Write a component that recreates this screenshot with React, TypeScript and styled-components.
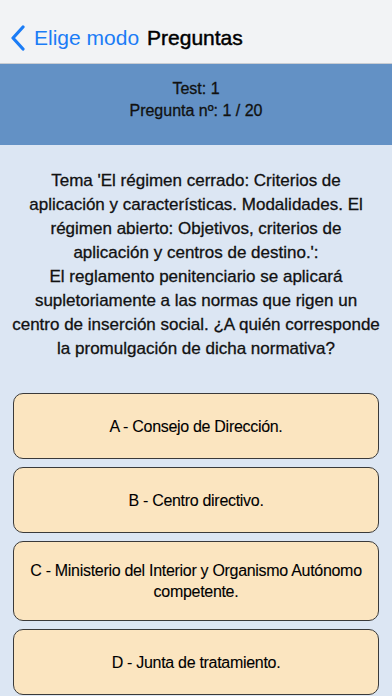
import styled, { createGlobalStyle } from 'styled-components';

const GlobalStyle = createGlobalStyle`
    html, body {
        margin: 0;
        padding: 0;
        background: #dce6f3;
    }
    body {
        font-family: 'Liberation Sans', Arial, sans-serif;
    }
`;

const Screen = styled.div`
    width: 392px;
    height: 696px;
    overflow: hidden;
    display: flex;
    flex-direction: column;
    background: #dce6f3;
    & > * {
        flex-shrink: 0;
    }
`;

const NavBar = styled.div`
    height: 64px;
    box-sizing: border-box;
    padding: 12px 0 0 10px;
    display: flex;
    align-items: center;
    background: #f2f3f5;
    border-bottom: 1px solid #c9ccd2;
`;

const BackLink = styled.span`
    display: flex;
    align-items: center;
    gap: 8px;
    color: #1b7cf6;
    font-size: 21px;
`;

const NavTitle = styled.span`
    margin-left: 8px;
    color: #000;
    font-size: 21px;
    -webkit-text-stroke: 0.45px #000;
`;

const Header = styled.div`
    height: 81px;
    box-sizing: border-box;
    padding-top: 14px;
    display: flex;
    flex-direction: column;
    align-items: center;
    background: #6391c5;
    color: #111;
    font-size: 16px;
    line-height: 22px;
    -webkit-text-stroke: 0.3px #111;
`;

const QuestionBlock = styled.div`
    margin: 24px 0 32px;
    text-align: center;
    color: #111;
    font-size: 17px;
    line-height: 24px;
    -webkit-text-stroke: 0.3px #111;
`;

const Line = styled.p<{ $inset: number }>`
    margin: 0 ${(props) => props.$inset}px;
`;

const Answers = styled.div`
    display: flex;
    flex-direction: column;
    gap: 8px;
    padding: 0 13px;
`;

const Answer = styled.div<{ $tall?: boolean }>`
    min-height: ${(props) => (props.$tall ? '80px' : '66px')};
    box-sizing: border-box;
    padding: 8px 8px;
    display: flex;
    align-items: center;
    justify-content: center;
    text-align: center;
    background: #fbe5c0;
    border: 1px solid #3a3a3a;
    border-radius: 10px;
    color: #000;
    font-size: 16px;
    letter-spacing: -0.3px;
    line-height: 21px;
    -webkit-text-stroke: 0.1px #000;
`;

function Chevron(): JSX.Element {
    return (
        <svg width="16" height="26" viewBox="0 0 16 26">
            <path d="M13 2 L3 13 L13 24" fill="none" stroke="#1b7cf6" strokeWidth="3.2" strokeLinecap="round" strokeLinejoin="round" />
        </svg>
    );
}

const answers = [
    { text: 'A - Consejo de Dirección.' },
    { text: 'B - Centro directivo.' },
    { text: 'C - Ministerio del Interior y Organismo Autónomo competente.', tall: true },
    { text: 'D - Junta de tratamiento.' },
];

export default function App(): JSX.Element {
    return (
        <Screen>
            <GlobalStyle />
            <NavBar>
                <BackLink>
                    <Chevron />
                    Elige modo
                </BackLink>
                <NavTitle>Preguntas</NavTitle>
            </NavBar>
            <Header>
                <span>Test: 1</span>
                <span>Pregunta nº: 1 / 20</span>
            </Header>
            <QuestionBlock>
                <Line $inset={14}>
                    Tema 'El régimen cerrado: Criterios de aplicación y características. Modalidades. El régimen abierto: Objetivos, criterios de aplicación y centros de destino.':
                </Line>
                <Line $inset={11}>
                    El reglamento penitenciario se aplicará supletoriamente a las normas que rigen un centro de inserción social. ¿A quién corresponde la promulgación de dicha normativa?
                </Line>
            </QuestionBlock>
            <Answers>
                {answers.map((a) => (
                    <Answer key={a.text} $tall={a.tall}>{a.text}</Answer>
                ))}
            </Answers>
        </Screen>
    );
}
